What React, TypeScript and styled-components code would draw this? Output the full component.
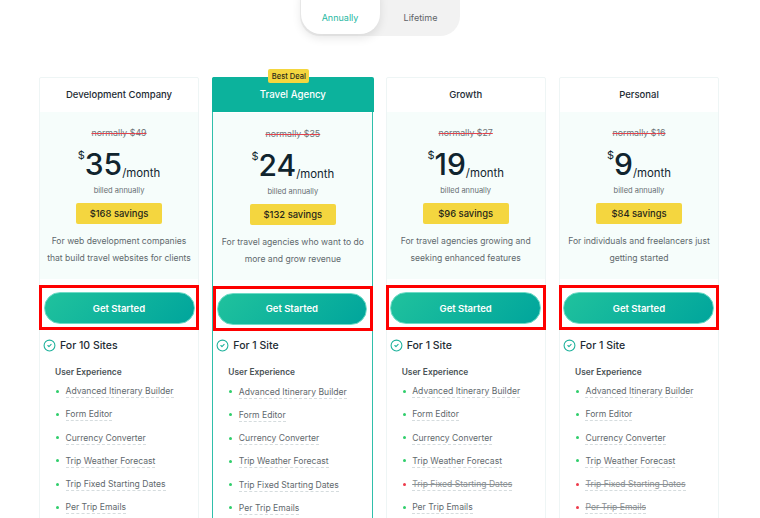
import React from 'react';
import styled, { createGlobalStyle } from 'styled-components';
import { CircleCheck } from 'lucide-react';

const GlobalStyle = createGlobalStyle`
  html,
  body {
    margin: 0;
    height: 518px;
    overflow: hidden;
    background: #fff;
    font-family: 'Inter', 'Liberation Sans', sans-serif;
  }
`;

const Page = styled.div`
  width: 760px;
  height: 518px;
  overflow: hidden;
`;

const ToggleRow = styled.div`
  display: flex;
  justify-content: center;
  height: 77px;
`;

const Toggle = styled.div`
  display: flex;
  width: 160px;
  height: 56px;
  margin: -20px 0 0 -1px;
  padding-left: 1px;
  box-sizing: border-box;
  background: #f2f2f2;
  border-radius: 20px;
`;

const ToggleOption = styled.div<{ $active?: boolean }>`
  width: 79px;
  height: 54px;
  padding: 20px 0 0 ${(p) => (p.$active ? '0' : '3px')};
  box-sizing: border-box;
  display: flex;
  align-items: center;
  justify-content: center;
  font-size: 9px;
  color: ${(p) => (p.$active ? '#1fb8a2' : '#5f6368')};
  background: ${(p) => (p.$active ? '#fff' : 'transparent')};
  border-radius: 20px;
  box-shadow: ${(p) => (p.$active ? '0 4px 10px rgba(0, 0, 0, 0.1)' : 'none')};
`;

const Grid = styled.div`
  display: grid;
  grid-template-columns: repeat(4, 160px);
  column-gap: 13.33px;
  width: 680px;
  margin-left: 39px;
`;

const Card = styled.div<{ $featured?: boolean }>`
  position: relative;
  box-sizing: border-box;
  width: ${(p) => (p.$featured ? '161px' : '160px')};
  height: 520px;
  border: ${(p) => (p.$featured ? '1.5px solid #2fbfab' : '1px solid #eef5f5')};
  border-radius: 2px;
`;

const Ribbon = styled.div`
  position: absolute;
  top: -9px;
  left: 55px;
  width: 41px;
  height: 14px;
  display: flex;
  align-items: center;
  justify-content: center;
  background: #f4d63f;
  border-radius: 2px;
  font-size: 7.5px;
  font-weight: 500;
  color: #2b2b1a;
`;

const CardHeader = styled.div<{ $featured?: boolean }>`
  height: ${(p) => (p.$featured ? '35px' : '34px')};
  margin: ${(p) => (p.$featured ? '-1.5px -1.5px 0' : '0')};
  padding-bottom: ${(p) => (p.$featured ? '0' : '2px')};
  box-sizing: border-box;
  display: flex;
  align-items: center;
  justify-content: center;
  font-size: ${(p) => (p.$featured ? '9.7px' : '9.5px')};
  font-weight: 500;
  color: ${(p) => (p.$featured ? '#fff' : '#1d2b33')};
  background: ${(p) => (p.$featured ? '#0cb29c' : '#fff')};
  border-radius: 2px 2px 0 0;
`;

const PriceBox = styled.div<{ $featured?: boolean }>`
  height: 167px;
  margin-top: ${(p) => (p.$featured ? '1px' : '0')};
  padding-top: 15px;
  box-sizing: border-box;
  display: flex;
  flex-direction: column;
  align-items: center;
  background: #f6fdfb;
`;

const WasPrice = styled.div`
  font-size: 8.8px;
  line-height: 12px;
  color: #6d7478;
  text-decoration: line-through;
  text-decoration-color: #e0444f;
`;

const PriceRow = styled.div`
  display: flex;
  align-items: flex-start;
  height: 36px;
  margin-top: 7px;
  color: #10242e;
`;

const Currency = styled.span`
  font-size: 11px;
  line-height: 14px;
  margin-top: 2px;
`;

const Amount = styled.span`
  font-size: 30px;
  font-weight: 500;
  line-height: 36px;
`;

const Period = styled.span`
  font-size: 11.4px;
  line-height: 14px;
  margin-top: 20px;
`;

const Billed = styled.div`
  margin-top: 4px;
  font-size: 7.5px;
  line-height: 10px;
  color: #666e72;
`;

const Savings = styled.div`
  width: 86px;
  height: 21px;
  margin-top: 7px;
  display: flex;
  align-items: center;
  justify-content: center;
  background: #f4d63f;
  border-radius: 2px;
  font-size: 9.4px;
  font-weight: 500;
  color: #26261a;
`;

const Blurb = styled.p`
  margin: 9px 0 0;
  font-size: 8.6px;
  line-height: 17px;
  text-align: center;
  color: #5f696d;
`;

const CtaFrame = styled.div<{ $featured?: boolean }>`
  box-sizing: border-box;
  width: 160px;
  height: 45px;
  margin: ${(p) => (p.$featured ? '6px 0 0 0' : '6px 0 0 -1px')};
  padding: ${(p) => (p.$featured ? '4px 3.5px 3px 0.5px' : '4px 1.5px 3px')};
  border: 3px solid #fe0000;
`;

const CtaButton = styled.button`
  display: block;
  width: 100%;
  height: 32px;
  padding: 0;
  border: 1px solid #6fdcc6;
  border-radius: 16px;
  background: linear-gradient(135deg, #20c29d, #00a59c);
  color: #fff;
  font-family: inherit;
  font-size: 9.5px;
  font-weight: 600;
`;

const SiteCount = styled.div`
  display: flex;
  align-items: center;
  gap: 4px;
  margin: 8px 0 0 3px;
  height: 14px;
  font-size: 10.5px;
  font-weight: 500;
  color: #1d2b33;
  svg {
    width: 13px;
    height: 13px;
    color: #1fb29c;
  }
`;

const GroupTitle = styled.div`
  margin: 13.5px 0 0 15px;
  font-size: 8.4px;
  line-height: 12px;
  font-weight: 600;
  color: #4a5256;
`;

const Features = styled.ul`
  margin: 7.5px 0 0 25.5px;
  padding: 0;
  list-style: none;
`;

const Feature = styled.li<{ $off?: boolean }>`
  position: relative;
  height: 23.3px;
  font-size: 8.6px;
  line-height: 12px;
  color: ${(p) => (p.$off ? '#8b9194' : '#5f696d')};
  &::before {
    content: '';
    position: absolute;
    left: -9.5px;
    top: 4.5px;
    width: 3px;
    height: 3px;
    border-radius: 50%;
    background: ${(p) => (p.$off ? '#ee3a4a' : '#2fce6b')};
  }
`;

const FeatureName = styled.span<{ $off?: boolean }>`
  display: inline-block;
  border-bottom: 1px dashed #d5dcde;
  text-decoration: ${(p) => (p.$off ? 'line-through' : 'none')};
`;

const featureNames = [
  'Advanced Itinerary Builder',
  'Form Editor',
  'Currency Converter',
  'Trip Weather Forecast',
  'Trip Fixed Starting Dates',
  'Per Trip Emails',
];

const plans = [
  {
    name: 'Development Company',
    was: 49,
    price: 35,
    savings: 168,
    blurb: ['For web development companies', 'that build travel websites for clients'],
    sites: 'For 10 Sites',
    off: [] as string[],
  },
  {
    name: 'Travel Agency',
    was: 35,
    price: 24,
    savings: 132,
    blurb: ['For travel agencies who want to do', 'more and grow revenue'],
    sites: 'For 1 Site',
    featured: true,
    off: [] as string[],
  },
  {
    name: 'Growth',
    was: 27,
    price: 19,
    savings: 96,
    blurb: ['For travel agencies growing and', 'seeking enhanced features'],
    sites: 'For 1 Site',
    off: ['Trip Fixed Starting Dates'],
  },
  {
    name: 'Personal',
    was: 16,
    price: 9,
    savings: 84,
    blurb: ['For individuals and freelancers just', 'getting started'],
    sites: 'For 1 Site',
    off: ['Trip Fixed Starting Dates', 'Per Trip Emails'],
  },
];

export default function App() {
  return (
    <Page>
      <GlobalStyle />
      <ToggleRow>
        <Toggle>
          <ToggleOption $active>Annually</ToggleOption>
          <ToggleOption>Lifetime</ToggleOption>
        </Toggle>
      </ToggleRow>
      <Grid>
        {plans.map((plan) => (
          <Card key={plan.name} $featured={plan.featured}>
            {plan.featured && <Ribbon>Best Deal</Ribbon>}
            <CardHeader $featured={plan.featured}>{plan.name}</CardHeader>
            <PriceBox $featured={plan.featured}>
              <WasPrice>normally ${plan.was}</WasPrice>
              <PriceRow>
                <Currency>$</Currency>
                <Amount>{plan.price}</Amount>
                <Period>/month</Period>
              </PriceRow>
              <Billed>billed annually</Billed>
              <Savings>${plan.savings} savings</Savings>
              <Blurb>
                {plan.blurb[0]}
                <br />
                {plan.blurb[1]}
              </Blurb>
            </PriceBox>
            <CtaFrame $featured={plan.featured}>
              <CtaButton>Get Started</CtaButton>
            </CtaFrame>
            <SiteCount>
              <CircleCheck strokeWidth={2} />
              {plan.sites}
            </SiteCount>
            <GroupTitle>User Experience</GroupTitle>
            <Features>
              {featureNames.map((name) => {
                const off = plan.off.includes(name);
                return (
                  <Feature key={name} $off={off}>
                    <FeatureName $off={off}>{name}</FeatureName>
                  </Feature>
                );
              })}
            </Features>
          </Card>
        ))}
      </Grid>
    </Page>
  );
}
